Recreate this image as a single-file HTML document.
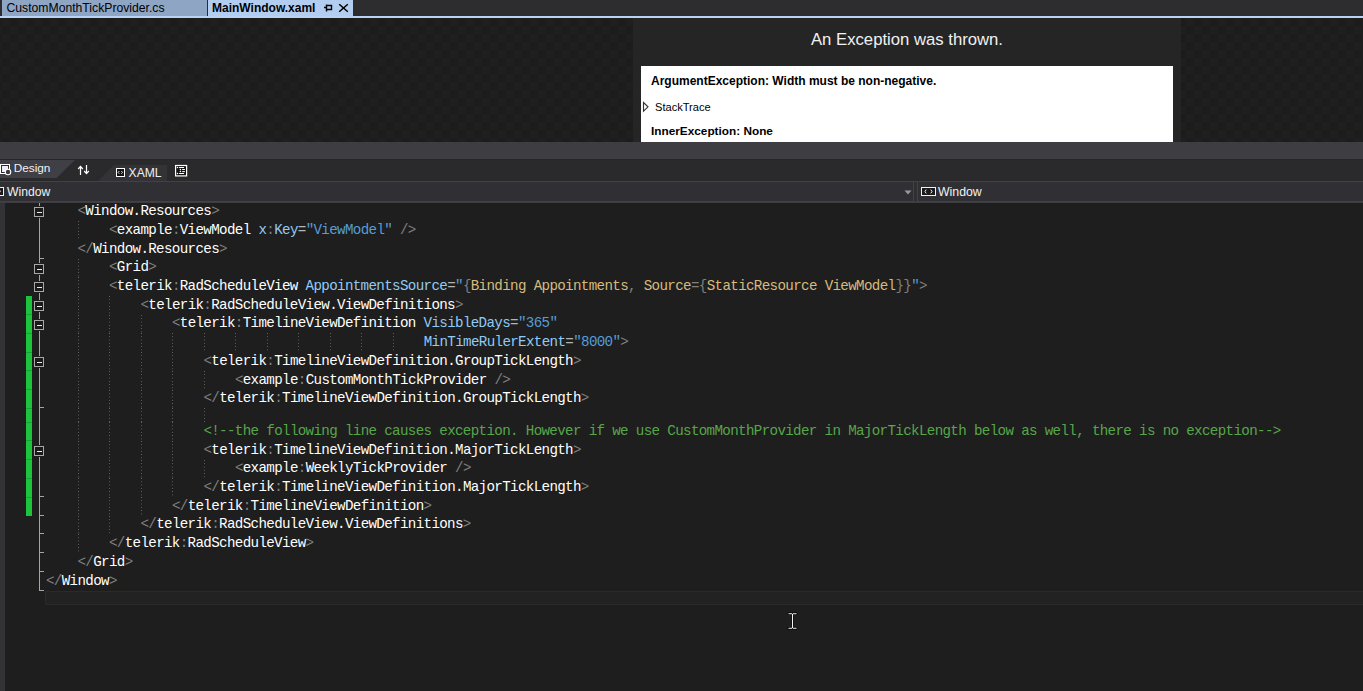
<!DOCTYPE html>
<html><head><meta charset="utf-8">
<style>
*{margin:0;padding:0;box-sizing:border-box}
html,body{width:1363px;height:691px;overflow:hidden;background:#1e1e1e;font-family:"Liberation Sans",sans-serif}
.abs{position:absolute}
/* tab strip */
#tabs{position:absolute;left:0;top:0;width:1363px;height:16px;background:#2d2d30}
#tab1{position:absolute;left:2px;top:0;width:205px;height:16px;background:#8fa5c4}
#tab2{position:absolute;left:208px;top:0;width:145px;height:16px;background:#b3cdf0}
.tt{position:absolute;font-size:12px;color:#000;white-space:pre;line-height:14px}
#tabline{position:absolute;left:0;top:16px;width:1363px;height:2px;background:#b8d2f4}
/* designer */
#designer{position:absolute;left:0;top:18px;width:1363px;height:124px;
 background:repeating-conic-gradient(#1c1c1c 0 25%,#1f1f1f 0 50%) 2px 0/16px 16px}
#panel{position:absolute;left:633px;top:18px;width:548px;height:124px;background:#252526}
#title{position:absolute;left:0;width:548px;top:11.5px;text-align:center;color:#f1f1f1;font-size:16.7px;white-space:pre;line-height:20px}
#white{position:absolute;left:641px;top:66px;width:532px;height:76px;background:#fff}
.ex{position:absolute;white-space:pre;color:#000;line-height:14px}
/* splitter & tabs */
#split{position:absolute;left:0;top:142px;width:1363px;height:17px;background:#3e3e42}
#vtabs{position:absolute;left:0;top:159px;width:1363px;height:22px;background:#2a2a2d}
#navline{position:absolute;left:0;top:181px;width:1363px;height:1px;background:#3f3f46}
#nav{position:absolute;left:0;top:182px;width:1363px;height:20px;background:#303034}
#navbot{position:absolute;left:0;top:201px;width:1363px;height:2px;background:#3d3d41}
.ui{position:absolute;white-space:pre;color:#f1f1f1;font-size:12px;line-height:14px}
/* editor */
#editor{position:absolute;left:0;top:203px;width:1363px;height:488px;background:#1e1e1e}
#lstrip{position:absolute;left:0;top:203px;width:5px;height:488px;background:#333337}
.ln{position:absolute;white-space:pre;font-family:"Liberation Mono",monospace;font-size:14.2px;letter-spacing:-0.651px;line-height:18.7px;height:18.7px}
.g{position:absolute;width:1px;background-image:linear-gradient(to bottom,#6a6a6a 0,#6a6a6a 1px,transparent 1px);background-size:1px 3.3px}
.fl{position:absolute;width:1px;background:#a5a5a5}
.ft{position:absolute;width:5px;height:1px;background:#a5a5a5}
.fb{position:absolute;width:10px;height:10px;border:1px solid #a8a8a8;background:#1a1a1a;box-shadow:0 0 0 1px #1e1e1e}
.fb i{position:absolute;left:2px;top:3.6px;width:5px;height:1.4px;background:#ececec}
.gr{position:absolute;left:26px;width:6px;background:#1cc43c}
.grs{position:absolute;left:26px;width:6px;height:1px;background:#17a233}
.cur{position:absolute;left:45px;width:1318px;border:1px solid #2a2a2a;border-right:none;background:#222}
</style></head><body>
<div id="tabs"></div>
<div id="tab1"><span class="tt" style="left:4.5px;top:0.8px;font-size:12.2px">CustomMonthTickProvider.cs</span></div>
<div id="tab2"><span class="tt" style="left:4px;top:1px;font-weight:bold">MainWindow.xaml</span>
 <svg class="abs" style="left:115px;top:3px" width="10" height="10" viewBox="0 0 10 10"><path d="M1 4.5H3.5M3.5 1.5V8.5M3.5 2.5H8.5V6.5H3.5" stroke="#000" stroke-width="1.4" fill="none"/></svg>
 <svg class="abs" style="left:130px;top:3px" width="11" height="10" viewBox="0 0 11 10"><path d="M1.2 1.2L9.8 8.8M9.8 1.2L1.2 8.8" stroke="#000" stroke-width="1.5" fill="none"/></svg>
</div>
<div id="tabline"></div>
<div id="designer"></div>
<div id="panel"><div id="title">An Exception was thrown.</div></div>
<div id="white"></div>
<span class="ex" style="left:651px;top:74px;font-size:12px;font-weight:bold">ArgumentException: Width must be non-negative.</span>
<svg class="abs" style="left:642px;top:101px" width="8" height="12" viewBox="0 0 8 12"><path d="M1.5 1.5L6 5.8L1.5 10.2Z" stroke="#333" stroke-width="1.1" fill="none"/></svg>
<span class="ex" style="left:655px;top:100px;font-size:11.1px">StackTrace</span>
<span class="ex" style="left:651px;top:124px;font-size:11.8px;font-weight:bold">InnerException: None</span>

<div id="split"></div>
<div id="vtabs"></div>
<div class="abs" style="left:0;top:159px;width:1363px;height:1px;background:#262628"></div>
<svg class="abs" style="left:0;top:159px" width="200" height="22" viewBox="0 0 200 22">
 <path d="M0 1H75L56.5 19H0Z" fill="#3f3f46"/>
 <path d="M114 6H167V22H98Z" fill="#333337"/>
</svg>
<!-- design icon -->
<svg class="abs" style="left:0;top:163px" width="13" height="13" viewBox="0 0 13 13">
 <rect x="0" y="1" width="10" height="10" fill="#fff"/>
 <rect x="1.5" y="2.5" width="7" height="7" fill="#eeeef2" stroke="#2d2d30" stroke-width="1"/>
 <circle cx="8" cy="9" r="3.3" fill="#fff"/>
 <circle cx="8" cy="9" r="2.2" fill="#3a3a3e"/>
</svg>
<span class="ui" style="left:13.7px;top:160.8px;font-size:11.8px">Design</span>
<svg class="abs" style="left:76px;top:164px" width="14" height="12" viewBox="0 0 14 12">
 <path d="M4.5 11V2.6M2.2 5L4.5 2.4L6.8 5" stroke="#fff" stroke-width="1.2" fill="none"/>
 <path d="M10.5 1V9.4M8.2 7L10.5 9.6L12.8 7" stroke="#fff" stroke-width="1.2" fill="none"/>
</svg>
<svg class="abs" style="left:115px;top:167px" width="12" height="12" viewBox="0 0 12 12">
 <rect x="1.5" y="1.5" width="8" height="8" fill="#141414" stroke="#fff" stroke-width="1"/>
 <path d="M4.3 4L3.1 5.4L4.3 6.8M6.3 4L7.5 5.4L6.3 6.8" stroke="#f1f1f1" stroke-width="0.9" fill="none"/>
</svg>
<span class="ui" style="left:128.6px;top:165.8px;font-size:12.1px">XAML</span>
<svg class="abs" style="left:174px;top:164px" width="14" height="13" viewBox="0 0 14 13">
 <rect x="1.6" y="1.5" width="11" height="10.4" fill="#141414" stroke="#fff" stroke-width="1.2"/>
 <circle cx="3.5" cy="3.5" r="0.75" fill="#fff"/><circle cx="6.4" cy="5.5" r="0.75" fill="#fff"/>
 <circle cx="6.4" cy="7.6" r="0.75" fill="#fff"/><circle cx="3.5" cy="9.5" r="0.75" fill="#fff"/>
 <path d="M5.1 3.5H10.1M8.2 5.5H10.9M8.2 7.6H10.9M5.1 9.5H10.1" stroke="#fff" stroke-width="1"/>
</svg>

<div id="navline"></div>
<div id="nav"></div>
<div id="navbot"></div>
<div class="abs" style="left:-2px;top:181px;width:916px;height:21px;border:1px solid #424246"></div>
<div class="abs" style="left:917px;top:181px;width:460px;height:21px;border:1px solid #424246"></div>
<svg class="abs" style="left:-6px;top:186px" width="11" height="11" viewBox="0 0 11 11"><rect x="1.5" y="1.5" width="8" height="8" fill="#1a1a1a" stroke="#f1f1f1" stroke-width="1"/><rect x="5" y="4.5" width="1.6" height="1.6" fill="#f1f1f1"/></svg>
<span class="ui" style="left:7px;top:185px;font-size:12.2px">Window</span>
<svg class="abs" style="left:904px;top:190px" width="8" height="5" viewBox="0 0 8 5"><path d="M0.5 0.5H7.5L4 4.5Z" fill="#999"/></svg>
<svg class="abs" style="left:920px;top:186px" width="17" height="11" viewBox="0 0 17 11"><rect x="1.5" y="1.5" width="14" height="8" fill="#1a1a1a" stroke="#f1f1f1" stroke-width="1"/><path d="M6.2 3.6L5 5.5L6.2 7.4M10.8 3.6L12 5.5L10.8 7.4" stroke="#f1f1f1" stroke-width="1" fill="none"/></svg>
<span class="ui" style="left:938px;top:185px;font-size:12.3px">Window</span>

<div id="editor"></div>
<div id="lstrip"></div>
<div class="ln" style="top:202.20px;left:77.48px"><span style="color:#808080">&lt;</span><span style="color:#ffffff">Window.Resources</span><span style="color:#808080">&gt;</span></div>
<div class="ln" style="top:220.90px;left:108.96px"><span style="color:#808080">&lt;</span><span style="color:#ffffff">example</span><span style="color:#808080">:</span><span style="color:#ffffff">ViewModel</span><span style="color:#ffffff"> </span><span style="color:#92caf4">x</span><span style="color:#808080">:</span><span style="color:#92caf4">Key</span><span style="color:#b4b4b4">=</span><span style="color:#569cd6">&quot;ViewModel&quot;</span><span style="color:#808080"> /&gt;</span></div>
<div class="ln" style="top:239.60px;left:77.48px"><span style="color:#808080">&lt;/</span><span style="color:#ffffff">Window.Resources</span><span style="color:#808080">&gt;</span></div>
<div class="ln" style="top:258.30px;left:108.96px"><span style="color:#808080">&lt;</span><span style="color:#ffffff">Grid</span><span style="color:#808080">&gt;</span></div>
<div class="ln" style="top:277.00px;left:108.96px"><span style="color:#808080">&lt;</span><span style="color:#ffffff">telerik</span><span style="color:#808080">:</span><span style="color:#ffffff">RadScheduleView</span><span style="color:#ffffff"> </span><span style="color:#92caf4">AppointmentsSource</span><span style="color:#b4b4b4">=</span><span style="color:#569cd6">&quot;</span><span style="color:#808080">{</span><span style="color:#d7ba7d">Binding Appointments</span><span style="color:#808080">, </span><span style="color:#d7ba7d">Source</span><span style="color:#808080">=</span><span style="color:#808080">{</span><span style="color:#d7ba7d">StaticResource ViewModel</span><span style="color:#808080">}}</span><span style="color:#569cd6">&quot;</span><span style="color:#808080">&gt;</span></div>
<div class="ln" style="top:295.70px;left:140.44px"><span style="color:#808080">&lt;</span><span style="color:#ffffff">telerik</span><span style="color:#808080">:</span><span style="color:#ffffff">RadScheduleView.ViewDefinitions</span><span style="color:#808080">&gt;</span></div>
<div class="ln" style="top:314.40px;left:171.92px"><span style="color:#808080">&lt;</span><span style="color:#ffffff">telerik</span><span style="color:#808080">:</span><span style="color:#ffffff">TimelineViewDefinition</span><span style="color:#ffffff"> </span><span style="color:#92caf4">VisibleDays</span><span style="color:#b4b4b4">=</span><span style="color:#569cd6">&quot;365&quot;</span></div>
<div class="ln" style="top:333.10px;left:423.76px"><span style="color:#92caf4">MinTimeRulerExtent</span><span style="color:#b4b4b4">=</span><span style="color:#569cd6">&quot;8000&quot;</span><span style="color:#808080">&gt;</span></div>
<div class="ln" style="top:351.80px;left:203.40px"><span style="color:#808080">&lt;</span><span style="color:#ffffff">telerik</span><span style="color:#808080">:</span><span style="color:#ffffff">TimelineViewDefinition.GroupTickLength</span><span style="color:#808080">&gt;</span></div>
<div class="ln" style="top:370.50px;left:234.88px"><span style="color:#808080">&lt;</span><span style="color:#ffffff">example</span><span style="color:#808080">:</span><span style="color:#ffffff">CustomMonthTickProvider</span><span style="color:#808080"> /&gt;</span></div>
<div class="ln" style="top:389.20px;left:203.40px"><span style="color:#808080">&lt;/</span><span style="color:#ffffff">telerik</span><span style="color:#808080">:</span><span style="color:#ffffff">TimelineViewDefinition.GroupTickLength</span><span style="color:#808080">&gt;</span></div>
<div class="ln" style="top:421.90px;left:203.40px"><span style="color:#57a64a">&lt;!--the following line causes exception. However if we use CustomMonthProvider in MajorTickLength below as well, there is no exception--&gt;</span></div>
<div class="ln" style="top:440.60px;left:203.40px"><span style="color:#808080">&lt;</span><span style="color:#ffffff">telerik</span><span style="color:#808080">:</span><span style="color:#ffffff">TimelineViewDefinition.MajorTickLength</span><span style="color:#808080">&gt;</span></div>
<div class="ln" style="top:459.30px;left:234.88px"><span style="color:#808080">&lt;</span><span style="color:#ffffff">example</span><span style="color:#808080">:</span><span style="color:#ffffff">WeeklyTickProvider</span><span style="color:#808080"> /&gt;</span></div>
<div class="ln" style="top:478.00px;left:203.40px"><span style="color:#808080">&lt;/</span><span style="color:#ffffff">telerik</span><span style="color:#808080">:</span><span style="color:#ffffff">TimelineViewDefinition.MajorTickLength</span><span style="color:#808080">&gt;</span></div>
<div class="ln" style="top:496.70px;left:171.92px"><span style="color:#808080">&lt;/</span><span style="color:#ffffff">telerik</span><span style="color:#808080">:</span><span style="color:#ffffff">TimelineViewDefinition</span><span style="color:#808080">&gt;</span></div>
<div class="ln" style="top:515.40px;left:140.44px"><span style="color:#808080">&lt;/</span><span style="color:#ffffff">telerik</span><span style="color:#808080">:</span><span style="color:#ffffff">RadScheduleView.ViewDefinitions</span><span style="color:#808080">&gt;</span></div>
<div class="ln" style="top:534.10px;left:108.96px"><span style="color:#808080">&lt;/</span><span style="color:#ffffff">telerik</span><span style="color:#808080">:</span><span style="color:#ffffff">RadScheduleView</span><span style="color:#808080">&gt;</span></div>
<div class="ln" style="top:552.80px;left:77.48px"><span style="color:#808080">&lt;/</span><span style="color:#ffffff">Grid</span><span style="color:#808080">&gt;</span></div>
<div class="ln" style="top:571.50px;left:46.00px"><span style="color:#808080">&lt;/</span><span style="color:#ffffff">Window</span><span style="color:#808080">&gt;</span></div>
<div class="g" style="left:77.98px;top:221.20px;height:18.70px"></div>
<div class="g" style="left:77.98px;top:258.60px;height:18.70px"></div>
<div class="g" style="left:77.98px;top:277.30px;height:18.70px"></div>
<div class="g" style="left:77.98px;top:296.00px;height:18.70px"></div>
<div class="g" style="left:109.46px;top:296.00px;height:18.70px"></div>
<div class="g" style="left:77.98px;top:314.70px;height:18.70px"></div>
<div class="g" style="left:109.46px;top:314.70px;height:18.70px"></div>
<div class="g" style="left:140.94px;top:314.70px;height:18.70px"></div>
<div class="g" style="left:77.98px;top:333.40px;height:18.70px"></div>
<div class="g" style="left:109.46px;top:333.40px;height:18.70px"></div>
<div class="g" style="left:140.94px;top:333.40px;height:18.70px"></div>
<div class="g" style="left:172.42px;top:333.40px;height:18.70px"></div>
<div class="g" style="left:203.90px;top:333.40px;height:18.70px"></div>
<div class="g" style="left:235.38px;top:333.40px;height:18.70px"></div>
<div class="g" style="left:266.86px;top:333.40px;height:18.70px"></div>
<div class="g" style="left:298.34px;top:333.40px;height:18.70px"></div>
<div class="g" style="left:329.82px;top:333.40px;height:18.70px"></div>
<div class="g" style="left:361.30px;top:333.40px;height:18.70px"></div>
<div class="g" style="left:392.78px;top:333.40px;height:18.70px"></div>
<div class="g" style="left:77.98px;top:352.10px;height:18.70px"></div>
<div class="g" style="left:109.46px;top:352.10px;height:18.70px"></div>
<div class="g" style="left:140.94px;top:352.10px;height:18.70px"></div>
<div class="g" style="left:172.42px;top:352.10px;height:18.70px"></div>
<div class="g" style="left:77.98px;top:370.80px;height:18.70px"></div>
<div class="g" style="left:109.46px;top:370.80px;height:18.70px"></div>
<div class="g" style="left:140.94px;top:370.80px;height:18.70px"></div>
<div class="g" style="left:172.42px;top:370.80px;height:18.70px"></div>
<div class="g" style="left:203.90px;top:370.80px;height:18.70px"></div>
<div class="g" style="left:77.98px;top:389.50px;height:18.70px"></div>
<div class="g" style="left:109.46px;top:389.50px;height:18.70px"></div>
<div class="g" style="left:140.94px;top:389.50px;height:18.70px"></div>
<div class="g" style="left:172.42px;top:389.50px;height:18.70px"></div>
<div class="g" style="left:77.98px;top:408.20px;height:14.00px"></div>
<div class="g" style="left:109.46px;top:408.20px;height:14.00px"></div>
<div class="g" style="left:140.94px;top:408.20px;height:14.00px"></div>
<div class="g" style="left:172.42px;top:408.20px;height:14.00px"></div>
<div class="g" style="left:203.90px;top:408.20px;height:14.00px"></div>
<div class="g" style="left:77.98px;top:422.20px;height:18.70px"></div>
<div class="g" style="left:109.46px;top:422.20px;height:18.70px"></div>
<div class="g" style="left:140.94px;top:422.20px;height:18.70px"></div>
<div class="g" style="left:172.42px;top:422.20px;height:18.70px"></div>
<div class="g" style="left:77.98px;top:440.90px;height:18.70px"></div>
<div class="g" style="left:109.46px;top:440.90px;height:18.70px"></div>
<div class="g" style="left:140.94px;top:440.90px;height:18.70px"></div>
<div class="g" style="left:172.42px;top:440.90px;height:18.70px"></div>
<div class="g" style="left:77.98px;top:459.60px;height:18.70px"></div>
<div class="g" style="left:109.46px;top:459.60px;height:18.70px"></div>
<div class="g" style="left:140.94px;top:459.60px;height:18.70px"></div>
<div class="g" style="left:172.42px;top:459.60px;height:18.70px"></div>
<div class="g" style="left:203.90px;top:459.60px;height:18.70px"></div>
<div class="g" style="left:77.98px;top:478.30px;height:18.70px"></div>
<div class="g" style="left:109.46px;top:478.30px;height:18.70px"></div>
<div class="g" style="left:140.94px;top:478.30px;height:18.70px"></div>
<div class="g" style="left:172.42px;top:478.30px;height:18.70px"></div>
<div class="g" style="left:77.98px;top:497.00px;height:18.70px"></div>
<div class="g" style="left:109.46px;top:497.00px;height:18.70px"></div>
<div class="g" style="left:140.94px;top:497.00px;height:18.70px"></div>
<div class="g" style="left:77.98px;top:515.70px;height:18.70px"></div>
<div class="g" style="left:109.46px;top:515.70px;height:18.70px"></div>
<div class="g" style="left:77.98px;top:534.40px;height:18.70px"></div>
<div class="fl" style="left:39px;top:203px;height:387.50px"></div>
<div class="ft" style="left:39px;top:257.60px"></div>
<div class="ft" style="left:39px;top:407.20px"></div>
<div class="ft" style="left:39px;top:496.00px"></div>
<div class="ft" style="left:39px;top:514.70px"></div>
<div class="ft" style="left:39px;top:533.40px"></div>
<div class="ft" style="left:39px;top:552.10px"></div>
<div class="ft" style="left:39px;top:570.80px"></div>
<div class="ft" style="left:39px;top:589.50px"></div>
<div class="fb" style="left:34px;top:207px"><i></i></div>
<div class="fb" style="left:34px;top:264px"><i></i></div>
<div class="fb" style="left:34px;top:282px"><i></i></div>
<div class="fb" style="left:34px;top:301px"><i></i></div>
<div class="fb" style="left:34px;top:320px"><i></i></div>
<div class="fb" style="left:34px;top:357px"><i></i></div>
<div class="fb" style="left:34px;top:446px"><i></i></div>
<div class="gr" style="top:296.00px;height:219.70px"></div>
<div class="grs" style="top:314.20px"></div>
<div class="grs" style="top:332.90px"></div>
<div class="grs" style="top:351.60px"></div>
<div class="grs" style="top:370.30px"></div>
<div class="grs" style="top:389.00px"></div>
<div class="grs" style="top:407.70px"></div>
<div class="grs" style="top:421.70px"></div>
<div class="grs" style="top:440.40px"></div>
<div class="grs" style="top:459.10px"></div>
<div class="grs" style="top:477.80px"></div>
<div class="grs" style="top:496.50px"></div>
<div class="cur" style="top:590.50px;height:14.00px"></div>
<svg class="abs" style="left:787px;top:612px" width="11" height="18" viewBox="0 0 11 18"><g fill="none" stroke-linecap="square"><path d="M2 1.8H4.6M6.4 1.8H9M5.5 2.6V15.4M2 16.2H4.6M6.4 16.2H9" stroke="#000" stroke-width="2.6"/><path d="M2 1.8H4.6M6.4 1.8H9M5.5 2.6V15.4M2 16.2H4.6M6.4 16.2H9" stroke="#f4f4f4" stroke-width="1.1"/></g></svg>
</body></html>
